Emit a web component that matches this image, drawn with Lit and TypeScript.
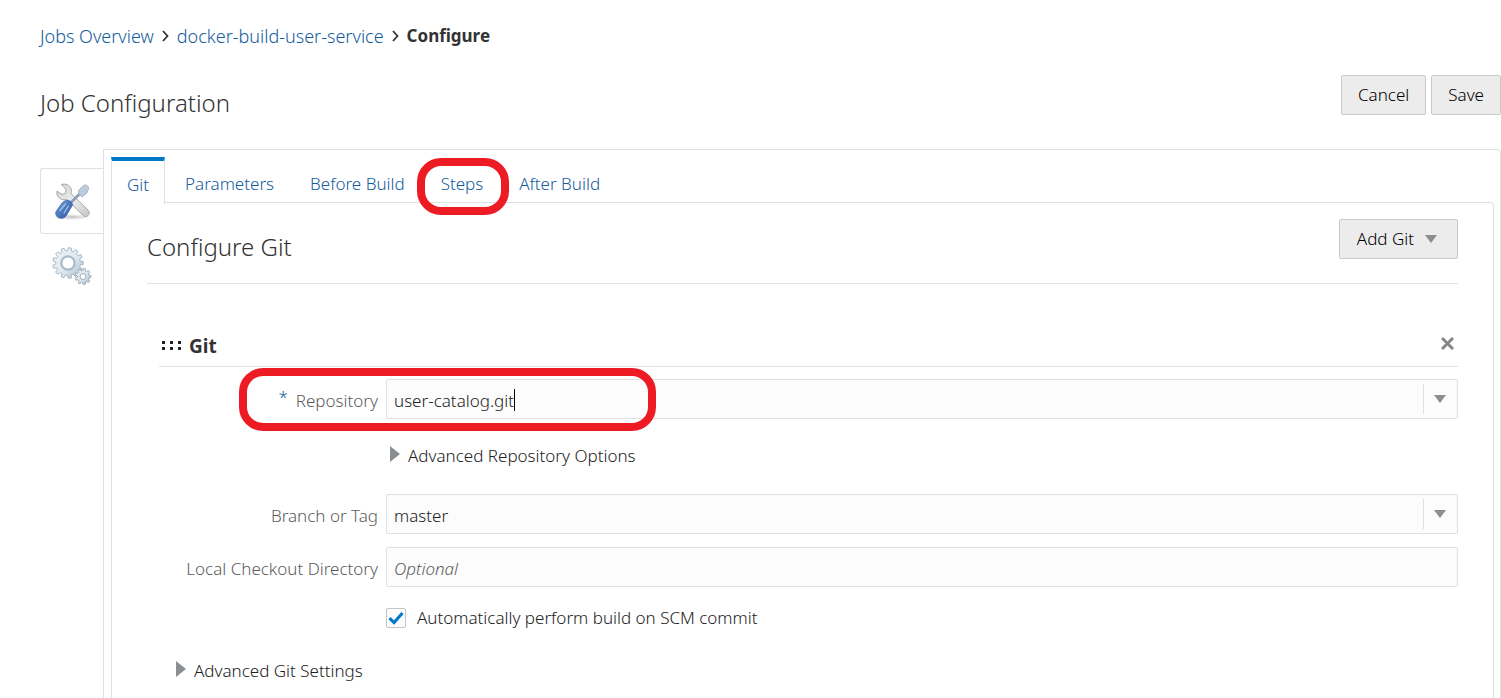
import { LitElement, html, css, svg } from "lit";
import { customElement, state, query } from "lit/decorators.js";
import { classMap } from "lit/directives/class-map.js";

const downArrow = svg`<path d="M0 0h12L6 8z" fill="#8b8e91"/>`;

function gearPath(cx: number, cy: number, outer: number, inner: number, teeth: number): string {
  const pts: string[] = [];
  const step = (Math.PI * 2) / teeth;
  for (let i = 0; i < teeth; i++) {
    const a = i * step;
    for (const [r, o] of [[inner, -0.34], [outer, -0.2], [outer, 0.2], [inner, 0.34]]) {
      pts.push(`${(cx + r * Math.cos(a + o * step)).toFixed(2)} ${(cy + r * Math.sin(a + o * step)).toFixed(2)}`);
    }
  }
  return `M${pts.join("L")}Z`;
}

const circle = (cx: number, cy: number, r: number) =>
  `M${cx - r} ${cy}a${r} ${r} 0 1 0 ${2 * r} 0a${r} ${r} 0 1 0 ${-2 * r} 0Z`;

const toolsIcon = html`
  <svg viewBox="0 0 40 40" width="40" height="40" aria-hidden="true">
    <defs>
      <linearGradient id="steel" x1="0" y1="0" x2="1" y2="1">
        <stop offset="0" stop-color="#d0d0d0" /><stop offset=".5" stop-color="#eeeeee" /><stop offset="1" stop-color="#c4c4c4" />
      </linearGradient>
      <linearGradient id="grip" x1="0" y1="0" x2="1" y2="1">
        <stop offset="0" stop-color="#7fa5dc" /><stop offset=".5" stop-color="#4a7abd" /><stop offset="1" stop-color="#2b5596" />
      </linearGradient>
      <radialGradient id="shade"><stop offset="0" stop-color="#999" stop-opacity=".6" /><stop offset="1" stop-color="#999" stop-opacity="0" /></radialGradient>
    </defs>
    <ellipse cx="20" cy="36" rx="19" ry="3" fill="url(#shade)" />
    <path d="M9.500 3.500c4-1.300 8.500.5 9.700 4.500.4 1.500.3 3-.2 4.500L36 29c1.700 1.800 1.400 4.200 0 5.600-1.500 1.400-4 1.200-5.400-.4L15 18.300c-4 1.400-8.500-.5-9.800-4.300-.4-1.300-.5-2.600-.2-4l5 3.600 3.700-1.500.3-3.800z"
      fill="url(#steel)" stroke="#a9a9a9" stroke-width="1" stroke-linejoin="round" />
    <path d="M31 9.500 18 22.500" stroke="#8a9fb8" stroke-width="2.800" />
    <path d="M26.500 9.500 31.500 4.500c2-1.400 5.500.3 5 3.300l-1.800 4.500-4.700 3.400-3.500-2.700z" fill="#bccbdd" stroke="#a3b3c6" stroke-width="1" />
    <path d="M16 19.500c2.500.3 4.300 2.300 4.500 4.500L14 35c-1.800 2.300-5.300 3-7.800 1.500s-3.200-4.700-1.700-6.700L10.500 21.500c1.500-1.500 3.500-2.300 5.500-2z"
      fill="url(#grip)" stroke="#3565a8" stroke-width=".8" />
    <path d="M8 29.500 13.500 23M12 32l4.500-7" stroke="#a9c4ea" stroke-width="1.200" stroke-linecap="round" />
  </svg>`;

const gearsIcon = html`
  <svg viewBox="0 0 40 40" width="40" height="40" aria-hidden="true">
    <defs>
      <linearGradient id="metal" x1="0" y1="0" x2="1" y2="1">
        <stop offset="0" stop-color="#eef3f7" /><stop offset=".55" stop-color="#dfe8ef" /><stop offset="1" stop-color="#a4b8c8" />
      </linearGradient>
    </defs>
    <path d=${gearPath(16, 16, 15.3, 12.3, 13) + circle(16, 16, 6)} fill="url(#metal)" stroke="#9fb3c2" stroke-width=".9" fill-rule="evenodd" />
    <circle cx="16" cy="16" r="7" fill="none" stroke="#a8bac8" stroke-width="1.600" />
    <path d=${gearPath(31, 29.5, 8, 5.8, 9) + circle(31, 29.5, 3)} fill="url(#metal)" stroke="#8ea4b5" stroke-width=".9" fill-rule="evenodd" />
  </svg>`;

@customElement("app-root")
export class AppRoot extends LitElement {
  @state() private repository = "user-catalog.git";
  @state() private branch = "master";
  @state() private caretX = 0;
  @query("#repository") private repositoryInput!: HTMLInputElement;

  static styles = css`
    :host {
      display: flex;
      flex-direction: column;
      box-sizing: border-box;
      height: 100vh;
      overflow: hidden;
      padding-left: 40px;
      background: #fff;
      color: #222;
      font: 300 17px/24px "Noto Sans", "Open Sans", sans-serif;
    }
    * { box-sizing: border-box; }
    svg { display: block; flex: none; }
    button, input { font: inherit; color: inherit; margin: 0; }
    button { cursor: pointer; }
    a { color: #145c9e; text-decoration: none; }
    h1, h2, h3 { margin: 0; font-weight: 300; }
    .crumbs { display: flex; align-items: center; gap: 7px; padding-top: 24px; }
    .crumbs a { font-size: 18px; }
    .crumbs strong { font-weight: 700; color: #333; }
    .header { display: flex; align-items: center; justify-content: space-between; margin-top: 23px; }
    .title { font-size: 24px; line-height: 32px; padding-top: 16px; color: #333; }
    .actions { display: flex; gap: 5px; }
    .btn {
      height: 40px;
      padding: 0 16px;
      border: 1px solid #c8c9ca;
      border-radius: 2px;
      background: #ececec;
      color: #000;
      display: flex;
      align-items: center;
      gap: 11px;
    }
    .btn.menu { padding: 0 20px 0 17px; }
    .body { display: flex; flex: 1; min-height: 0; margin-top: 30px; }
    .side { width: 64px; margin-right: -1px; padding-top: 19px; z-index: 1; flex: none; }
    .side button {
      display: flex;
      align-items: center;
      justify-content: center;
      width: 64px;
      height: 66px;
      padding: 0 2px 0 0;
      border: 1px solid transparent;
      border-right: 0;
      background: none;
    }
    .side .on { border-color: #dfe0e1; border-radius: 3px 0 0 3px; }
    .outer {
      flex: 1;
      min-width: 0;
      display: flex;
      flex-direction: column;
      padding: 7px 6px 0 7px;
      border: 1px solid #dfe0e1;
      border-bottom: 0;
      border-radius: 0 4px 0 0;
    }
    .tabs { display: flex; height: 46px; gap: 4px; z-index: 1; }
    .tab {
      position: relative;
      padding: 8px 16px 0;
      border: 0;
      background: none;
      color: #145c9e;
    }
    .tab.on {
      height: 47px;
      padding: 4px 15px 0;
      border: 1px solid #dfe0e1;
      border-top: 4px solid #0078c8;
      border-bottom: 0;
      background: #fff;
    }
    .mark { position: absolute; border: 8px solid #ed1c24; border-radius: 24px; pointer-events: none; }
    .mark.step { inset: 1px -10px -12px -8px; }
    .mark.repo { top: -11px; bottom: -12px; left: 92px; width: 417px; z-index: 1; }
    .inner {
      flex: 1;
      min-height: 0;
      margin-top: -1px;
      padding: 16px 35px 0;
      border: 1px solid #dfe0e1;
      border-bottom: 0;
      border-radius: 0 4px 0 0;
    }
    .section { display: flex; justify-content: space-between; height: 65px; border-bottom: 1px solid #e2e3e4; }
    .section h2 { font-size: 24px; line-height: 32px; padding-top: 12px; color: #333; }
    .item {
      display: flex;
      align-items: center;
      gap: 8px;
      margin: 41px 0 12px 12px;
      height: 42px;
      padding: 0 4px 0 3px;
      border-bottom: 1px solid #e2e3e4;
    }
    .item h3 { flex: 1; font-size: 19px; font-weight: 700; color: #333; }
    .close { display: flex; padding: 0 0 4px; border: 0; background: none; }
    .row { position: relative; display: grid; grid-template-columns: 231px 1fr; column-gap: 8px; align-items: center; }
    .row label { text-align: right; color: #5c5c5c; padding-top: 3px; }
    .req { color: #145c9e; margin-right: 8px; vertical-align: 4px; line-height: 1; }
    .field {
      position: relative;
      display: flex;
      align-items: center;
      height: 40px;
      border: 1px solid #dfe0e1;
      border-radius: 2px;
      background: #fcfcfc;
    }
    .field input {
      flex: 1;
      min-width: 0;
      height: 38px;
      padding: 2px 7px 0;
      border: 0;
      outline: 0;
      background: none;
      color: #222;
    }
    .field input::placeholder { color: #5c5c5c; opacity: 1; font-style: italic; }
    .field button {
      display: flex;
      align-items: center;
      justify-content: center;
      width: 34px;
      height: 30px;
      padding: 0 2px 0 0;
      border: 0;
      border-left: 1px solid #dfe0e1;
      background: none;
    }
    .caret { position: absolute; top: 9px; width: 1px; height: 22px; background: #000; }
    .more {
      display: flex;
      align-items: center;
      gap: 8px;
      padding: 0;
      border: 0;
      background: none;
    }
    .more svg { margin-bottom: 4px; }
    .more.repo-more { margin: 25px 0 26px 243px; }
    .more.git-more { margin: 29px 0 0 29px; }
    .gap { margin-top: 13px; }
    .check { display: flex; align-items: center; gap: 11px; margin: 19px 0 0 239px; }
    .check input {
      appearance: none;
      width: 20px;
      height: 20px;
      border: 1px solid #c4c5c6;
      border-radius: 2px;
      background: #fcfcfc;
    }
    .check input:checked {
      background: #fcfcfc url("data:image/svg+xml,%3Csvg xmlns='http://www.w3.org/2000/svg' viewBox='0 0 18 18'%3E%3Cpath d='M2.500 9.200 7 13.500 15.500 4' fill='none' stroke='%230078c8' stroke-width='3'/%3E%3C/svg%3E");
    }
  `;

  private readonly tabs = ["Git", "Parameters", "Before Build", "Steps", "After Build"];

  firstUpdated() {
    this.placeCaret();
  }

  private placeCaret() {
    const style = getComputedStyle(this.repositoryInput);
    const ctx = document.createElement("canvas").getContext("2d")!;
    ctx.font = `${style.fontWeight} ${style.fontSize} ${style.fontFamily}`;
    this.caretX = Math.round(parseFloat(style.paddingLeft) + ctx.measureText(this.repository).width);
  }

  private onRepository(e: InputEvent) {
    this.repository = (e.target as HTMLInputElement).value;
    this.placeCaret();
  }

  private arrow() {
    return html`<svg width="12" height="8" aria-hidden="true">${downArrow}</svg>`;
  }

  private chevron() {
    return html`<svg width="9" height="12" viewBox="0 0 9 12" aria-hidden="true"><path d="M2 1l4.500 5L2 11" fill="none" stroke="#333" stroke-width="1.800"/></svg>`;
  }

  private disclosure(label: string, cls: string) {
    return html`<button class="more ${cls}" aria-expanded="false">
      <svg width="10" height="16" aria-hidden="true"><path d="M0 0l10 8L0 16z" fill="#8b8e91"/></svg>${label}
    </button>`;
  }

  render() {
    return html`
      <nav class="crumbs" aria-label="Breadcrumb">
        <a href="#jobs">Jobs Overview</a>${this.chevron()}
        <a href="#job">docker-build-user-service</a>${this.chevron()}
        <strong>Configure</strong>
      </nav>
      <header class="header">
        <h1 class="title">Job Configuration</h1>
        <div class="actions"><button class="btn">Cancel</button><button class="btn">Save</button></div>
      </header>
      <main class="body">
        <div class="side">
          <button class="on" aria-label="Configuration">${toolsIcon}</button>
          <button aria-label="Settings">${gearsIcon}</button>
        </div>
        <div class="outer">
          <div class="tabs" role="tablist">
            ${this.tabs.map((t) => html`<button role="tab" class=${classMap({ tab: true, on: t === "Git" })}
              aria-selected=${t === "Git"}>${t}${t === "Steps" ? html`<span class="mark step"></span>` : ""}</button>`)}
          </div>
          <section class="inner">
            <div class="section">
              <h2>Configure Git</h2>
              <button class="btn menu">Add Git ${this.arrow()}</button>
            </div>
            <div class="item">
              <svg width="19" height="9" aria-hidden="true"><path d="M0 0h3v3H0zM8 0h3v3H8zM16 0h3v3h-3zM0 6h3v3H0zM8 6h3v3H8zM16 6h3v3h-3z" fill="#222"/></svg>
              <h3>Git</h3>
              <button class="close" aria-label="Remove"><svg width="13" height="13" aria-hidden="true"><path d="M1 1l11 11M12 1L1 12" stroke="#85888b" stroke-width="3"/></svg></button>
            </div>
            <div class="row">
              <label for="repository"><span class="req">*</span>Repository</label>
              <div class="field">
                <input id="repository" .value=${this.repository} @input=${this.onRepository} />
                <span class="caret" style="left:${this.caretX}px"></span>
                <button aria-label="Show repositories">${this.arrow()}</button>
              </div>
              <span class="mark repo"></span>
            </div>
            ${this.disclosure("Advanced Repository Options", "repo-more")}
            <div class="row">
              <label for="branch">Branch or Tag</label>
              <div class="field">
                <input id="branch" .value=${this.branch} />
                <button aria-label="Show branches">${this.arrow()}</button>
              </div>
            </div>
            <div class="row gap">
              <label for="directory">Local Checkout Directory</label>
              <div class="field"><input id="directory" placeholder="Optional" /></div>
            </div>
            <div class="check">
              <input type="checkbox" id="auto" checked />
              <label for="auto">Automatically perform build on SCM commit</label>
            </div>
            ${this.disclosure("Advanced Git Settings", "git-more")}
          </section>
        </div>
      </main>
    `;
  }
}
